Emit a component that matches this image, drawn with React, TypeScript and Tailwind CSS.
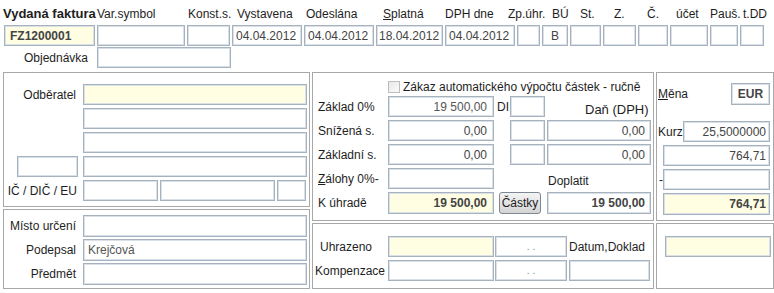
import React from "react";

type FieldProps = {
  className?: string;
  yellow?: boolean;
  children?: React.ReactNode;
};

const Field = ({ className = "", yellow = false, children }: FieldProps) => (
  <div
    className={`flex shrink-0 items-center overflow-hidden whitespace-nowrap border border-[#a6b2be] text-[#444] shadow-[inset_0_0_0_1px_#d9e0e7] ${
      yellow ? "bg-[#fffde2]" : "bg-white"
    } ${className}`}
  >
    {children}
  </div>
);

const Panel = ({ className = "", children }: { className?: string; children?: React.ReactNode }) => (
  <div className={`shrink-0 border border-[#a8a8a8] ${className}`}>{children}</div>
);

const Label = ({ className = "", children }: { className?: string; children?: React.ReactNode }) => (
  <div className={`flex shrink-0 items-center whitespace-nowrap ${className}`}>{children}</div>
);

const App = () => {
  return (
    <div className="h-[293px] w-[774px] overflow-hidden bg-white font-['Liberation_Sans',Arial,sans-serif] text-[12px] leading-[14px] text-[#1e1e1e]">
      {/* header labels */}
      <div className="flex h-[25px] items-end whitespace-nowrap pb-[4px]">
        <span className="w-[97px] shrink-0 pl-[3px] text-[13px] font-bold">Vydaná faktura</span>
        <span className="w-[91px] shrink-0">Var.symbol</span>
        <span className="w-[49px] shrink-0">Konst.s.</span>
        <span className="w-[69px] shrink-0">Vystavena</span>
        <span className="w-[77px] shrink-0">Odeslána</span>
        <span className="w-[62px] shrink-0">
          <u>S</u>platná
        </span>
        <span className="w-[63px] shrink-0">DPH dne</span>
        <span className="w-[44px] shrink-0">Zp.úhr.</span>
        <span className="w-[28px] shrink-0">BÚ</span>
        <span className="w-[34px] shrink-0">St.</span>
        <span className="w-[33px] shrink-0">Z.</span>
        <span className="w-[29px] shrink-0">Č.</span>
        <span className="w-[34px] shrink-0">účet</span>
        <span className="w-[33px] shrink-0">Pauš.</span>
        <span className="shrink-0">t.DD</span>
      </div>

      {/* header inputs */}
      <div className="ml-[4px] flex h-[21px] gap-[2px]">
        <Field yellow className="h-[21px] w-[91px] pl-[5px] font-bold text-[#1e2a78]">
          FZ1200001
        </Field>
        <Field className="h-[21px] w-[88px]" />
        <Field className="h-[21px] w-[43px]" />
        <Field className="h-[21px] w-[70px] pl-[3px]">04.04.2012</Field>
        <Field className="h-[21px] w-[70px] pl-[3px]">04.04.2012</Field>
        <Field className="h-[21px] w-[67px] pl-[2px]">18.04.2012</Field>
        <Field className="h-[21px] w-[70px] pl-[3px]">04.04.2012</Field>
        <Field className="h-[21px] w-[23px]" />
        <Field className="h-[21px] w-[26px] justify-center">B</Field>
        <Field className="h-[21px] w-[31px]" />
        <Field className="h-[21px] w-[33px]" />
        <Field className="h-[21px] w-[30px]" />
        <Field className="h-[21px] w-[38px]" />
        <Field className="h-[21px] w-[28px]" />
        <Field className="h-[21px] w-[24px]" />
      </div>

      <div className="mt-[1px] flex h-[21px]">
        <Label className="w-[97px] justify-end pr-[9px]">Objednávka</Label>
        <Field className="h-[21px] w-[134px]" />
      </div>

      {/* panels */}
      <div className="ml-[3px] mt-[4px] flex gap-[2px]">
        {/* left column */}
        <div className="flex w-[307px] shrink-0 flex-col gap-[2px]">
          <Panel className="h-[135px] w-[307px] pt-[11px]">
            <div className="flex flex-col gap-[3px]">
              <div className="flex h-[21px]">
                <Label className="w-[79px] justify-end pr-[7px]">Odběratel</Label>
                <Field yellow className="h-[21px] w-[224px]" />
              </div>
              <div className="flex h-[21px]">
                <div className="w-[79px] shrink-0" />
                <Field className="h-[21px] w-[224px]" />
              </div>
              <div className="flex h-[21px]">
                <div className="w-[79px] shrink-0" />
                <Field className="h-[21px] w-[224px]" />
              </div>
              <div className="flex h-[21px]">
                <div className="flex w-[79px] shrink-0 justify-end pr-[5px]">
                  <Field className="h-[21px] w-[61px]" />
                </div>
                <Field className="h-[21px] w-[224px]" />
              </div>
              <div className="flex h-[21px]">
                <Label className="w-[79px] justify-end pr-[6px]">IČ / DIČ / EU</Label>
                <div className="flex gap-[2px]">
                  <Field className="h-[21px] w-[75px]" />
                  <Field className="h-[21px] w-[115px]" />
                  <Field className="h-[21px] w-[29px]" />
                </div>
              </div>
            </div>
          </Panel>
          <Panel className="h-[80px] w-[307px] pt-[5px]">
            <div className="flex flex-col gap-[2px]">
              <div className="flex h-[22px]">
                <Label className="w-[79px] justify-end pr-[7px]">Místo určení</Label>
                <Field className="h-[22px] w-[224px]" />
              </div>
              <div className="flex h-[22px]">
                <Label className="w-[79px] justify-end pr-[7px]">Podepsal</Label>
                <Field className="h-[22px] w-[224px] pl-[4px] text-[#555]">Krejčová</Field>
              </div>
              <div className="flex h-[22px]">
                <Label className="w-[79px] justify-end pr-[7px]">Předmět</Label>
                <Field className="h-[22px] w-[224px]" />
              </div>
            </div>
          </Panel>
        </div>

        {/* middle column */}
        <div className="flex w-[342px] shrink-0 flex-col gap-[2px]">
          <Panel className="h-[149px] w-[342px] pt-[7px]">
            <div className="ml-[75px] flex h-[14px] items-center gap-[3px] whitespace-nowrap">
              <span className="h-[12px] w-[12px] shrink-0 border border-[#bdbdbd] bg-gradient-to-br from-[#e8e8e8] to-[#fafafa]" />
              <span>Zákaz automatického výpočtu částek - ručně</span>
            </div>
            <div className="mt-[2px] flex flex-col gap-[3px]">
              <div className="flex h-[21px]">
                <Label className="w-[75px] pl-[5px]">Základ 0%</Label>
                <Field className="h-[21px] w-[106px] justify-end pr-[6px] text-[#555]">19 500,00</Field>
                <div className="flex w-[53px] shrink-0 items-center">
                  <span className="w-[16px] shrink-0 pl-[3px]">DI</span>
                  <Field className="h-[21px] w-[35px]" />
                </div>
                <div className="flex w-[104px] shrink-0 items-end whitespace-nowrap pl-[38px] text-[13px] leading-[15px]">
                  Daň (DPH)
                </div>
              </div>
              <div className="flex h-[21px]">
                <Label className="w-[75px] pl-[5px]">Snížená s.</Label>
                <Field className="h-[21px] w-[106px] justify-end pr-[6px]">0,00</Field>
                <div className="flex w-[53px] shrink-0 items-center pl-[16px]">
                  <Field className="h-[21px] w-[35px]" />
                </div>
                <Field className="h-[21px] w-[104px] justify-end pr-[5px]">0,00</Field>
              </div>
              <div className="flex h-[21px]">
                <Label className="w-[75px] pl-[5px]">Základní s.</Label>
                <Field className="h-[21px] w-[106px] justify-end pr-[6px]">0,00</Field>
                <div className="flex w-[53px] shrink-0 items-center pl-[16px]">
                  <Field className="h-[21px] w-[35px]" />
                </div>
                <Field className="h-[21px] w-[104px] justify-end pr-[5px]">0,00</Field>
              </div>
              <div className="flex h-[21px]">
                <Label className="w-[75px] pl-[5px]">
                  <u>Z</u>álohy 0%-
                </Label>
                <Field className="h-[21px] w-[106px]" />
                <div className="w-[53px] shrink-0" />
                <div className="flex w-[104px] shrink-0 items-end pl-[1px] pb-[1px]">Doplatit</div>
              </div>
              <div className="flex h-[22px]">
                <Label className="w-[75px] pl-[5px]">K úhradě</Label>
                <Field yellow className="h-[22px] w-[106px] justify-end pr-[6px] font-bold text-[#1e2a78]">
                  19 500,00
                </Field>
                <div className="flex w-[53px] shrink-0 items-center pl-[5px]">
                  <button className="flex h-[22px] w-[42px] items-center justify-center rounded-[3px] border border-[#7d8894] bg-gradient-to-b from-[#f4f4f4] to-[#d4d4d4] text-[12px] text-[#222]">
                    Částky
                  </button>
                </div>
                <Field className="h-[22px] w-[104px] justify-end pr-[5px] font-bold text-[#111]">19 500,00</Field>
              </div>
            </div>
          </Panel>
          <Panel className="h-[66px] w-[342px] pt-[12px]">
            <div className="flex flex-col gap-[3px]">
              <div className="flex h-[21px]">
                <Label className="w-[75px] pl-[7px]">Uhrazeno</Label>
                <Field yellow className="h-[21px] w-[106px]" />
                <Field className="ml-[1px] h-[21px] w-[72px] justify-center text-[10px] text-[#888]">. .</Field>
                <Label className="ml-[2px]">Datum,Doklad</Label>
              </div>
              <div className="flex h-[21px]">
                <Label className="w-[75px] pl-[2px]">Kompenzace</Label>
                <Field className="h-[21px] w-[106px]" />
                <Field className="ml-[1px] h-[21px] w-[72px] justify-center text-[10px] text-[#888]">. .</Field>
                <Field className="ml-[2px] h-[21px] w-[81px]" />
              </div>
            </div>
          </Panel>
        </div>

        {/* right column */}
        <div className="flex w-[118px] shrink-0 flex-col gap-[2px]">
          <Panel className="h-[149px] w-[118px] pl-[1px] pr-[3px] pt-[10px]">
            <div className="flex h-[22px] items-center justify-between">
              <span>
                <u>M</u>ěna
              </span>
              <Field className="h-[22px] w-[39px] justify-center bg-[#f7f7ef] font-bold text-[#1e2a78]">EUR</Field>
            </div>
            <div className="mt-[16px] flex flex-col gap-[3px]">
              <div className="flex h-[21px] justify-between">
                <Label>Kurz</Label>
                <Field className="h-[21px] w-[87px] justify-end pr-[3px]">25,5000000</Field>
              </div>
              <div className="flex h-[21px] justify-end">
                <Field className="h-[21px] w-[107px] justify-end pr-[3px]">764,71</Field>
              </div>
              <div className="flex h-[21px] justify-between">
                <Label className="pl-[1px]">-</Label>
                <Field className="h-[21px] w-[107px]" />
              </div>
              <div className="flex h-[22px] justify-end">
                <Field yellow className="h-[22px] w-[107px] justify-end pr-[3px] font-bold text-[#1e2a78]">
                  764,71
                </Field>
              </div>
            </div>
          </Panel>
          <Panel className="h-[66px] w-[118px] pl-[8px] pt-[12px]">
            <Field yellow className="h-[21px] w-[106px]" />
          </Panel>
        </div>
      </div>
    </div>
  );
};

export default App;
